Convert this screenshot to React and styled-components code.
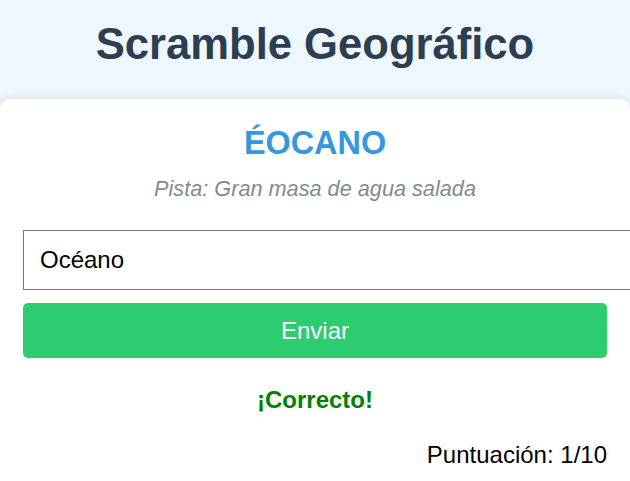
import React, { useState } from "react";
import styled, { createGlobalStyle } from "styled-components";

const GlobalStyle = createGlobalStyle`
  body {
    margin: 0;
    background: #eef6fe;
    font-family: "Liberation Sans", Arial, sans-serif;
    overflow: hidden;
  }
`;

const Page = styled.div`
  display: flex;
  flex-direction: column;
`;

const Title = styled.h1`
  margin: 0;
  height: 99px;
  display: flex;
  align-items: center;
  justify-content: center;
  font-size: 43.6px;
  font-weight: 700;
  color: #2c3e50;
  padding-bottom: 10px;
  box-sizing: border-box;
`;

const Card = styled.div`
  background: #ffffff;
  border-radius: 10px;
  box-shadow: 0 0 12px rgba(0, 0, 0, 0.1);
  padding: 26px 23px 30px 23px;
`;

const Scrambled = styled.h2`
  margin: 0;
  text-align: center;
  font-size: 32.4px;
  line-height: 37px;
  font-weight: 700;
  color: #3498db;
`;

const Hint = styled.p`
  margin: 14px 0 0 0;
  text-align: center;
  font-size: 21.7px;
  line-height: 26px;
  font-style: italic;
  color: #7f8c8d;
`;

const Answer = styled.input`
  display: block;
  margin-top: 28px;
  width: 100%;
  height: 58px;
  padding: 0 16px;
  border: 1px solid #767676;
  font-family: "Liberation Sans", Arial, sans-serif;
  font-size: 24px;
  color: #000;
  outline: none;
  box-sizing: content-box;
`;

const Submit = styled.button`
  display: block;
  width: 100%;
  height: 55px;
  margin-top: 13px;
  padding: 0;
  border: none;
  border-radius: 5px;
  background: #2ecc71;
  color: #ffffff;
  font-family: "Liberation Sans", Arial, sans-serif;
  font-size: 24px;
  cursor: pointer;
`;

const Feedback = styled.p`
  margin: 28px 0 0 0;
  text-align: center;
  font-size: 24px;
  line-height: 28px;
  font-weight: 700;
  color: ${(props) => (props.ok ? "#008000" : "#c0392b")};
`;

const Score = styled.p`
  margin: 27px 0 0 0;
  text-align: right;
  font-size: 24px;
  line-height: 28px;
  color: #000;
`;

const App = () => {
  const [guess, setGuess] = useState("Océano");

  return (
    <>
      <GlobalStyle />
      <Page>
        <Title>Scramble Geográfico</Title>
        <Card>
          <Scrambled>ÉOCANO</Scrambled>
          <Hint>Pista: Gran masa de agua salada</Hint>
          <Answer value={guess} onChange={(e) => setGuess(e.target.value)} />
          <Submit>Enviar</Submit>
          <Feedback ok>¡Correcto!</Feedback>
          <Score>Puntuación: 1/10</Score>
        </Card>
      </Page>
    </>
  );
};

export default App;
